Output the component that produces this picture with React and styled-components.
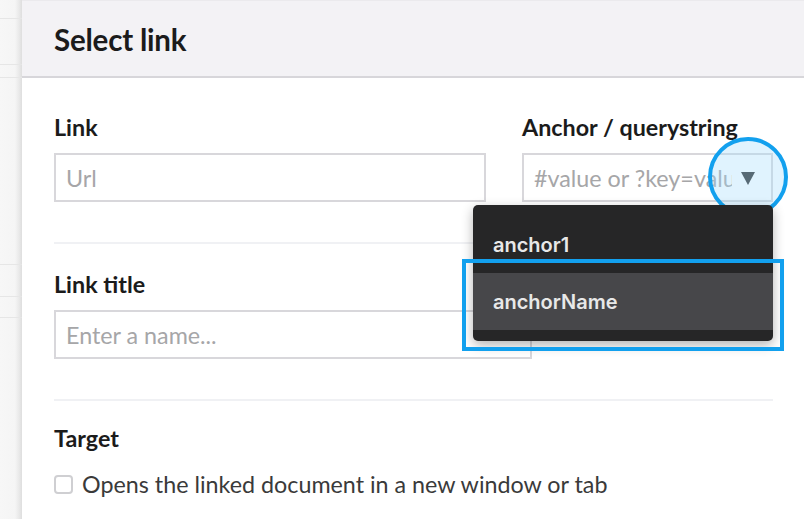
import React from "react";
import styled, { createGlobalStyle } from "styled-components";

const Global = createGlobalStyle`
  html, body { margin: 0; padding: 0; background: #fff; }
  body { font-family: Lato, "Open Sans", sans-serif; -webkit-font-smoothing: antialiased; }
  * { box-sizing: border-box; }
`;

const Page = styled.div`
  display: flex;
  width: 804px;
  height: 519px;
  overflow: hidden;
  background: #fff;
`;

const Strip = styled.div`
  width: 22px;
  flex: none;
  display: flex;
  flex-direction: column;
  background: linear-gradient(to right, #f7f7f7 0, #f5f5f5 15px, #e9e9e9 19px, #dedede 22px);
`;

const StripCell = styled.div`
  height: ${(p) => p.h}px;
  flex: ${(p) => (p.grow ? 1 : "none")};
  border-bottom: ${(p) => (p.grow ? "none" : "1px solid #e6e6e6")};
`;

const Panel = styled.div`
  flex: 1;
  min-width: 0;
  display: flex;
  flex-direction: column;
  background: #fff;
`;

const Header = styled.div`
  height: 78px;
  flex: none;
  display: flex;
  align-items: center;
  padding: 2px 0 0 32px;
  background: #f3f2f5;
  border-top: 1px solid #ebeaed;
  border-bottom: 2px solid #d7d6da;
`;

const Title = styled.h1`
  margin: 0;
  font-size: 29.5px;
  font-weight: 700;
  color: #1b1b1b;
  letter-spacing: -0.2px;
`;

const Body = styled.div`
  padding: 0 31px 0 32px;
`;

const Section = styled.div`
  padding: ${(p) => p.pt}px 0 ${(p) => p.pb}px;
  border-bottom: ${(p) => (p.last ? "none" : "2px solid #f0f1f4")};
`;

const Row = styled.div`
  display: grid;
  grid-template-columns: ${(p) => p.cols};
  column-gap: 36px;
`;

const Field = styled.div`
  position: relative;
  min-width: 0;
  display: flex;
  flex-direction: column;
`;

const Label = styled.label`
  display: block;
  height: 26px;
  line-height: 26px;
  margin-bottom: 13px;
  font-size: 23.3px;
  font-weight: 700;
  color: #1b1b1b;
  white-space: nowrap;
`;

const Input = styled.div`
  height: 49px;
  width: ${(p) => p.w || "100%"};
  border: 2px solid #d8d7db;
  display: flex;
  align-items: center;
  padding: 0 ${(p) => (p.select ? "39px" : "10px")} 0 10px;
  font-size: 23.3px;
  color: #a6a6a8;
  white-space: nowrap;
  overflow: hidden;
  position: relative;
`;

const Placeholder = styled.span`
  overflow: hidden;
  min-width: 0;
  display: block;
`;

const Caret = styled.span`
  position: absolute;
  right: 16px;
  top: 50%;
  margin-top: -6px;
  width: 0;
  height: 0;
  border-left: 7.5px solid transparent;
  border-right: 7.5px solid transparent;
  border-top: 13px solid #2d2d2d;
  z-index: 3;
`;

const Circle = styled.div`
  position: absolute;
  left: 186px;
  top: 23px;
  width: 80px;
  height: 80px;
  border-radius: 50%;
  border: 4px solid #12a0ee;
  background: rgba(166, 222, 252, 0.35);
  z-index: 4;
`;

const Menu = styled.div`
  position: absolute;
  left: -49px;
  top: 91px;
  width: 300px;
  padding: 11px 0;
  background: #262627;
  border-radius: 5px;
  box-shadow: 0 4px 12px rgba(0, 0, 0, 0.3);
  z-index: 5;
`;

const Item = styled.div`
  height: 57px;
  display: flex;
  align-items: center;
  padding-left: 20px;
  font-family: Inter, "Open Sans", sans-serif;
  font-size: 20px;
  font-weight: 600;
  color: #e8e8e8;
  background: ${(p) => (p.active ? "#47474a" : "transparent")};
`;

const Highlight = styled.div`
  position: absolute;
  left: -11px;
  top: 54px;
  width: 322px;
  height: 92px;
  border: 4px solid #12a0ee;
  z-index: 6;
`;

const Check = styled.label`
  display: flex;
  align-items: center;
  gap: 9px;
  margin-top: 19px;
  font-size: 23.3px;
  line-height: 28px;
  color: #3a3a3a;
`;

const Box = styled.span`
  width: 19px;
  height: 19px;
  border: 2px solid #cfcfd2;
  border-radius: 4px;
  flex: none;
`;

export default function App() {
  return (
    <Page>
      <Global />
      <Strip>
        <StripCell h={19} />
        <StripCell h={46} />
        <StripCell h={13} />
        <StripCell h={187} />
        <StripCell h={32} />
        <StripCell h={21} />
        <StripCell grow />
      </Strip>
      <Panel>
        <Header>
          <Title>Select link</Title>
        </Header>
        <Body>
          <Section pt={36} pb={40}>
            <Row cols="432px minmax(0, 1fr)">
              <Field>
                <Label>Link</Label>
                <Input>
                  <Placeholder>Url</Placeholder>
                </Input>
              </Field>
              <Field>
                <Label>Anchor / querystring</Label>
                <Input select>
                  <Placeholder>#value or ?key=value</Placeholder>
                  <Caret />
                </Input>
                <Circle />
                <Menu>
                  <Item>anchor1</Item>
                  <Item active>anchorName</Item>
                  <Highlight />
                </Menu>
              </Field>
            </Row>
          </Section>
          <Section pt={27} pb={40}>
            <Field>
              <Label>Link title</Label>
              <Input w="478px">
                <Placeholder>Enter a name...</Placeholder>
              </Input>
            </Field>
          </Section>
          <Section pt={24} pb={0} last>
            <Label as="div">Target</Label>
            <Check>
              <Box />
              Opens the linked document in a new window or tab
            </Check>
          </Section>
        </Body>
      </Panel>
    </Page>
  );
}
